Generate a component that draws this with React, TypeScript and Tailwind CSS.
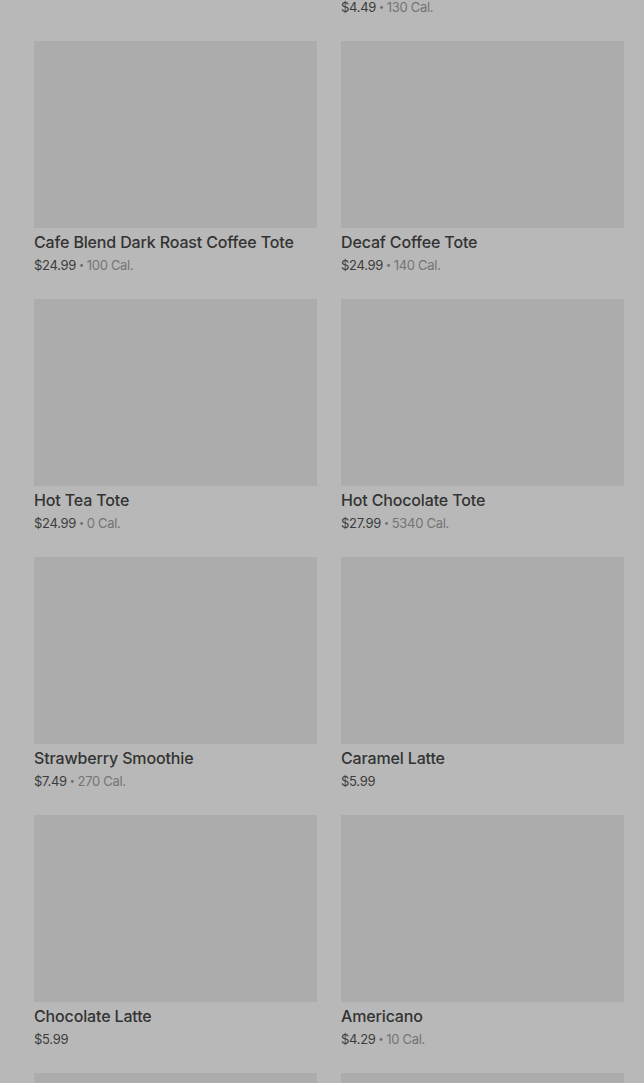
import React from 'react';

type Item = { name: string; price: string; cal?: string };

const items: Item[] = [
  { name: 'Cafe Blend Dark Roast Coffee Tote', price: '$24.99', cal: '100 Cal.' },
  { name: 'Decaf Coffee Tote', price: '$24.99', cal: '140 Cal.' },
  { name: 'Hot Tea Tote', price: '$24.99', cal: '0 Cal.' },
  { name: 'Hot Chocolate Tote', price: '$27.99', cal: '5340 Cal.' },
  { name: 'Strawberry Smoothie', price: '$7.49', cal: '270 Cal.' },
  { name: 'Caramel Latte', price: '$5.99' },
  { name: 'Chocolate Latte', price: '$5.99' },
  { name: 'Americano', price: '$4.29', cal: '10 Cal.' },
  { name: '', price: '' },
  { name: '', price: '' },
];

const PriceLine: React.FC<{ price: string; cal?: string }> = ({ price, cal }) => (
  <div className="h-[18px] flex items-center text-[13px] leading-[18px] tracking-[-0.3px] whitespace-nowrap">
    <span className="text-[#3c3c3c]">{price}</span>
    {cal && (
      <>
        <span className="text-[#6e6e6e] text-[9px] leading-[18px] mx-[3px]">•</span>
        <span className="text-[#747474]">{cal}</span>
      </>
    )}
  </div>
);

const Card: React.FC<{ item: Item }> = ({ item }) => (
  <div className="flex flex-col">
    <div className="h-[187px] bg-[#acacac]" />
    <div className="mt-[4px] h-[20px] text-[16px] leading-[20px] font-medium tracking-[-0.15px] text-[#333333] truncate">
      {item.name}
    </div>
    <div className="mt-[4px]">
      <PriceLine price={item.price} cal={item.cal} />
    </div>
  </div>
);

export default function App() {
  return (
    <div
      className="w-[644px] h-[1083px] overflow-hidden bg-[#b8b8b8] pl-[34px] pr-[20px]"
      style={{ fontFamily: 'Inter, "Noto Sans", sans-serif' }}
    >
      <div className="grid grid-cols-2 gap-x-6 -mt-[2px] mb-[25px]">
        <div className="h-[18px]" />
        <PriceLine price="$4.49" cal="130 Cal." />
      </div>
      <div className="grid grid-cols-2 gap-x-6 gap-y-[25px]">
        {items.map((item, i) => (
          <Card key={i} item={item} />
        ))}
      </div>
    </div>
  );
}
